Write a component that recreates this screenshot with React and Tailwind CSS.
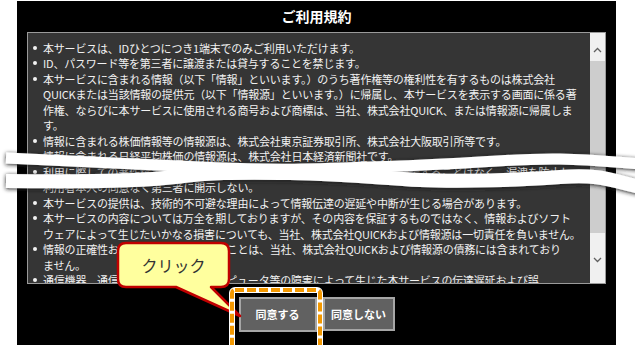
import React from "react";

const topItems = [
  ["本サービスは、IDひとつにつき1端末でのみご利用いただけます。"],
  ["ID、パスワード等を第三者に譲渡または貸与することを禁じます。"],
  [
    "本サービスに含まれる情報（以下「情報」といいます。）のうち著作権等の権利性を有するものは株式会社",
    "QUICKまたは当該情報の提供元（以下「情報源」といいます。）に帰属し、本サービスを表示する画面に係る著",
    "作権、ならびに本サービスに使用される商号および商標は、当社、株式会社QUICK、または情報源に帰属しま",
    "す。",
  ],
  ["情報に含まれる株価情報等の情報源は、株式会社東京証券取引所、株式会社大阪取引所等です。"],
  ["情報に含まれる日経平均株価の情報源は、株式会社日本経済新聞社です。"],
  [
    "利用に際しての著作権等の取扱いについて、当社は利用者から得た情報を開示することはなく、漏洩を防止し、",
    "利用者本人の同意なく第三者に開示しない。",
  ],
  ["本サービスの提供は、技術的不可避な理由によって情報伝達の遅延や中断が生じる場合があります。"],
  [
    "本サービスの内容については万全を期しておりますが、その内容を保証するものではなく、情報およびソフト",
    "ウェアによって生じたいかなる損害についても、当社、株式会社QUICKおよび情報源は一切責任を負いません。",
  ],
  [
    "情報の正確性および完全性を保証することは、当社、株式会社QUICKおよび情報源の債務には含まれており",
    "ません。",
  ],
  [
    "通信機器、通信回線、システム、コンピュータ等の障害によって生じた本サービスの伝達遅延および誤",
    "作動等に起因する損害について、当社、株式会社QUICKおよび情報源は一切責任を負いません。",
  ],
];

const Chevron = ({ up }) => (
  <svg width="9" height="6" viewBox="0 0 9 6">
    <path
      d={up ? "M1 5 L4.5 1.5 L8 5" : "M1 1 L4.5 4.5 L8 1"}
      fill="none"
      stroke="#606060"
      strokeWidth="1.3"
    />
  </svg>
);

const TermsItem = ({ lines }) => (
  <div>
    {lines.map((line, i) => (
      <div key={i} className="flex h-[15.5px] items-center whitespace-nowrap">
        <span className="w-[10px] shrink-0 flex items-center">
          {i === 0 && <span className="block w-[4px] h-[4px] rounded-full bg-[#f2f2f2]" />}
        </span>
        <span>{line}</span>
      </div>
    ))}
  </div>
);

const App = () => {
  return (
    <div className="relative w-[635px] h-[345px] overflow-hidden bg-white font-['Noto_Sans_CJK_JP','Noto_Sans',sans-serif]">
      {/* dialog */}
      <div className="ml-[17px] mt-px w-[599px] h-[344px] bg-black flex flex-col">
        <h1 className="h-[31px] flex items-center justify-center text-[14px] font-bold text-white">
          ご利用規約
        </h1>

        <div className="mx-[10px] h-[252px] border border-[#9a9a9a] bg-[#353535] flex overflow-hidden">
          <div className="flex-1 overflow-hidden pt-[7px] pl-[5px] text-[11px] tracking-[-0.2px] text-[#f2f2f2]">
            {topItems.map((lines, i) => (
              <TermsItem key={i} lines={lines} />
            ))}
          </div>
          {/* scrollbar */}
          <div className="w-[15px] shrink-0 bg-[#f0f0f0] flex flex-col">
            <div className="h-[28px] flex items-end justify-center pb-[8px]">
              <Chevron up />
            </div>
            <div className="h-[172px] bg-[#cdcdcd]" />
            <div className="flex-1 flex items-center justify-center pt-[4px]">
              <Chevron />
            </div>
          </div>
        </div>

        <div className="mt-[13px] flex justify-center gap-[6px]">
          <button className="w-[78px] h-[35px] bg-[#616161] border-2 border-[#a6a6a6] text-white text-[11px] font-bold">
            同意する
          </button>
          <button className="w-[72px] h-[34px] bg-[#616161] border-2 border-[#a6a6a6] text-white text-[11px] font-bold">
            同意しない
          </button>
        </div>
      </div>

      {/* annotations: omission wave, callout, highlight */}
      <svg className="absolute inset-0 pointer-events-none" width="635" height="345" viewBox="0 0 635 345">
        <defs>
          <filter id="soft" x="-5%" y="-60%" width="110%" height="220%">
            <feDropShadow dx="0" dy="1" stdDeviation="2" floodColor="#1a1a1a" floodOpacity="1" />
          </filter>
        </defs>
        <g filter="url(#soft)" fill="none" stroke="#fff" strokeLinecap="butt">
          <path d="M6 158 C 60 160, 120 163, 200 167 S 320 169, 400 166 S 520 158, 560 159 S 610 162, 640 164" strokeWidth="11" />
          <path d="M6 181 C 80 182, 140 181, 175 177 S 230 172, 290 173 S 380 178, 420 180 S 520 180, 560 177 S 610 180, 640 187" strokeWidth="14" />
        </g>

        <path
          d="M126 243 H221 Q229 243 229 251 V279 Q229 287 221 287 H211 L240 316 L176 287 H126 Q118 287 118 279 V251 Q118 243 126 243 Z"
          fill="#ffff9e"
          stroke="#c00000"
          strokeWidth="2.5"
          strokeLinejoin="round"
        />

        <rect x="232" y="290" width="88" height="70" rx="3" fill="none" stroke="#fff" strokeWidth="6" />
        <rect x="232" y="290" width="88" height="70" rx="3" fill="none" stroke="#f39800" strokeWidth="4" strokeDasharray="9 3" />
      </svg>

      <div className="absolute left-[118px] top-[243px] w-[111px] h-[44px] flex items-center justify-center text-[16px] text-[#333]">
        クリック
      </div>
    </div>
  );
};

export default App;
